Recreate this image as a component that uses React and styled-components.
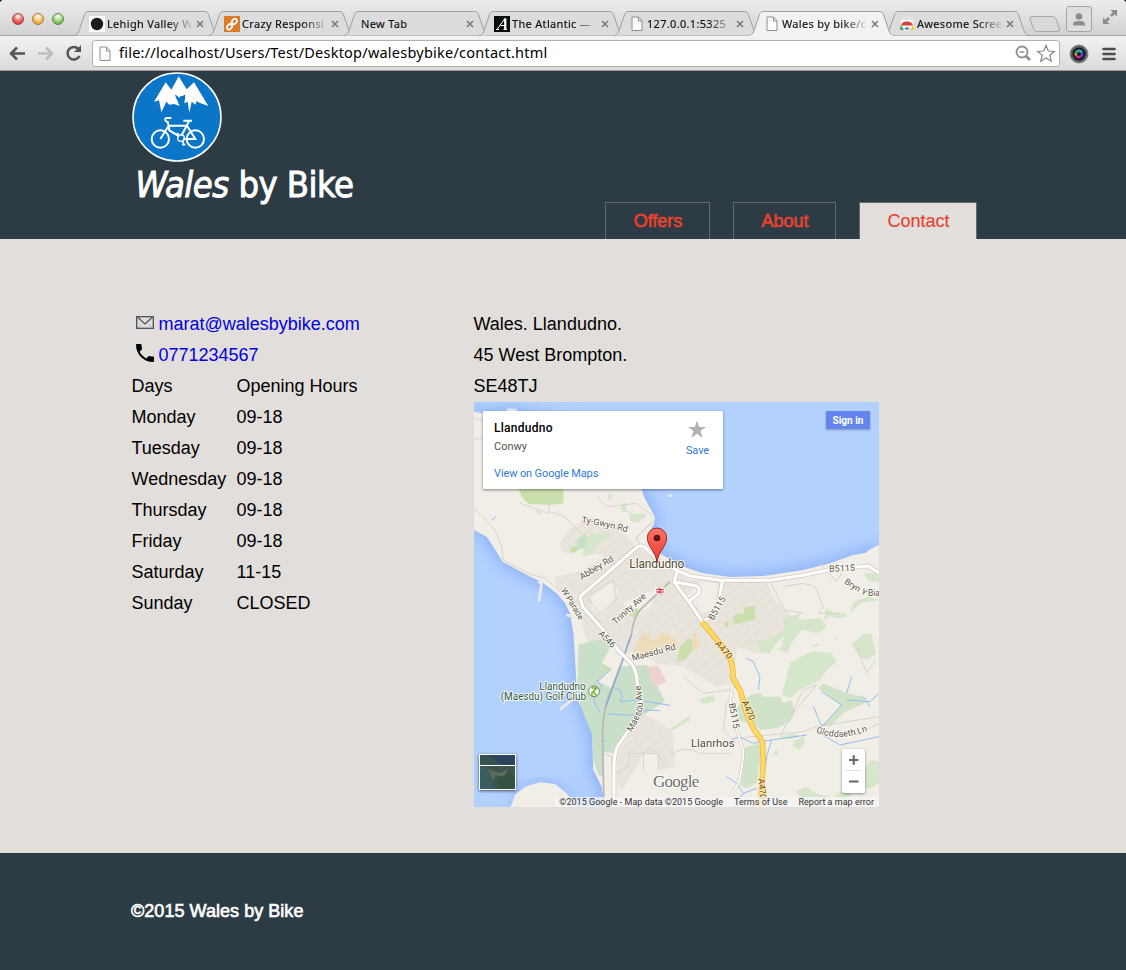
import React from 'react';
import styled, { createGlobalStyle, css } from 'styled-components';

const GlobalStyle = createGlobalStyle`
  * { box-sizing: border-box; }
  html, body { margin: 0; background: #111; }
  body { font-family: "Liberation Sans", Arial, sans-serif; font-size: 18px; color: #000; }
  svg { display: block; flex: none; }
`;

const Window = styled.div`
  width: 1126px;
  height: 970px;
  display: flex;
  flex-direction: column;
  overflow: hidden;
  border-radius: 4px 4px 0 0;
  background: #e2dedb;
`;

/* ---------- browser chrome ---------- */

const TabStrip = styled.div`
  height: 36px;
  display: flex;
  align-items: flex-start;
  background: linear-gradient(#ececec, #d2d2d2);
  border-bottom: 1px solid #a2a2a2;
  font-family: "Noto Sans", "Open Sans", sans-serif;
`;

const Lights = styled.div`
  display: flex;
  gap: 8px;
  padding: 13px 0 0 12px;
  width: 74px;
`;

const Light = styled.span`
  width: 12px;
  height: 12px;
  border-radius: 50%;
  background: radial-gradient(circle at 50% 25%, #fff 0%, ${p => p.$mid} 38%, ${p => p.$tone} 75%);
  border: 1px solid ${p => p.$edge};
`;

const Tabs = styled.div`
  display: flex;
  padding-top: 11px;
`;

const TabBox = styled.div`
  position: relative;
  width: 145px;
  height: 25px;
  margin-right: -10px;
  padding: 0 15px 0 15px;
  display: flex;
  align-items: center;
  z-index: ${p => (p.$active ? 2 : 1)};
`;

const TabShape = styled.svg`
  position: absolute;
  left: 0;
  top: 0;
  z-index: -1;
`;

const TabTitle = styled.span`
  flex: 1;
  margin: 0 5px 0 2px;
  font-size: 11px;
  line-height: 16px;
  letter-spacing: 0.32px;
  color: #111;
  -webkit-text-stroke: 0.15px #111;
  white-space: nowrap;
  overflow: hidden;
  ${p => p.$fade && css`mask-image: linear-gradient(90deg, #000 72%, transparent 104%);`}
`;

const ProfileButton = styled.div`
  width: 26px;
  height: 26px;
  margin: 6px 0 0 5px;
  border: 1px solid #a5a5a5;
  border-radius: 3px;
  background: #dedede;
  display: flex;
  align-items: center;
  justify-content: center;
`;

const NewTab = styled.svg`
  margin: 16px 0 0 9px;
`;

const FullScreen = styled.svg`
  margin: 9px 0 0 10px;
`;

const Toolbar = styled.div`
  height: 35px;
  padding: 4px 9px 0 9px;
  display: flex;
  align-items: flex-start;
  background: linear-gradient(#f2f2f2, #dcdcdc 94%);
  border-bottom: 1px solid #9b9b9b;
`;

const NavButtons = styled.div`
  display: flex;
  gap: 10px;
  width: 83px;
  padding-top: 4px;
`;

const Omnibox = styled.div`
  width: 968px;
  height: 27px;
  display: flex;
  align-items: center;
  padding: 0 3px 0 6px;
  background: #fff;
  border: 1px solid #b0b0b0;
  border-radius: 3px;
`;

const Address = styled.span`
  flex: 1;
  margin-left: 8px;
  padding-bottom: 2px;
  font-family: "Noto Sans", "Open Sans", sans-serif;
  font-size: 14.5px;
  line-height: 21px;
  letter-spacing: 0.23px;
`;

const ToolIcons = styled.div`
  display: flex;
  align-items: center;
  gap: 13px;
  margin-left: 8.500px;
  height: 27px;
`;

/* ---------- page ---------- */

const Header = styled.header`
  height: 168px;
  background: #2d3c44;
  display: flex;
  justify-content: space-between;
  padding: 1px 149px 0 132px;
`;

const Brand = styled.h1`
  margin: 0;
  font-family: "DejaVu Sans Condensed", "DejaVu Sans", sans-serif;
  font-stretch: condensed;
  font-weight: 400;
  font-size: 36px;
  line-height: 45px;
  color: #fff;
  white-space: nowrap;
`;

const BrandText = styled.span`
  display: block;
  padding-left: 3.500px;
  letter-spacing: -0.52px;
  -webkit-text-stroke: 0.9px #fff;
`;

const Nav = styled.nav`
  display: flex;
  align-items: flex-end;
  gap: 23px;
`;

const NavLink = styled.a`
  height: 37px;
  width: ${p => p.$width}px;
  padding-left: 1px;
  border: 1px solid #66696b;
  border-bottom: 0;
  text-align: center;
  line-height: 36px;
  color: #e8412f;
  ${p => (p.$active
    ? css`background: #e2dedb; -webkit-text-stroke: 0.15px #e8412f;`
    : css`-webkit-text-stroke: 0.6px #e8412f;`)}
`;

const Main = styled.main`
  height: 614px;
  padding: 70px 0 0 131.5px;
  display: flex;
`;

const Column = styled.section`
  width: ${p => p.$width}px;
`;

const Line = styled.div`
  height: 31px;
  line-height: 31px;
  display: flex;
  white-space: nowrap;
`;

const IconSlot = styled.span`
  width: 27px;
  padding: ${p => p.$top}px 0 0 4.5px;
`;

const Link = styled.a`
  color: #0000e0;
`;

const Day = styled.span`
  width: 105px;
`;

const Footer = styled.footer`
  flex: 1;
  background: #2d3c44;
  color: #fff;
  padding: 47px 0 0 131px;
  line-height: 22px;
  letter-spacing: 0.04px;
  -webkit-text-stroke: 0.65px #fff;
`;

/* ---------- map ---------- */

const MapFrame = styled.div`
  position: relative;
  width: 405px;
  height: 405px;
  margin-left: 0.5px;
  overflow: hidden;
  font-family: Roboto, sans-serif;
`;

const PlaceCard = styled.div`
  position: absolute;
  left: 9px;
  top: 9px;
  width: 240px;
  height: 78px;
  padding: 8px 14px 0 11px;
  display: flex;
  justify-content: space-between;
  background: #fff;
  border-radius: 1px;
  box-shadow: 0 1px 3px rgba(0, 0, 0, 0.45);
`;

const PlaceInfo = styled.div`
  display: flex;
  flex-direction: column;
`;

const PlaceName = styled.span`
  font-size: 12px;
  font-weight: 500;
  line-height: 18px;
  letter-spacing: 0.28px;
`;

const PlaceRegion = styled.span`
  font-size: 11px;
  line-height: 19px;
  color: #555;
`;

const MapLink = styled.span`
  font-size: 11px;
  line-height: 14px;
  letter-spacing: -0.12px;
  margin-top: ${p => p.$top}px;
  color: #2f7bd6;
`;

const SaveBox = styled.div`
  display: flex;
  flex-direction: column;
  align-items: center;
  padding-top: 1px;
`;

const SignIn = styled.div`
  position: absolute;
  left: 352px;
  top: 9px;
  width: 44px;
  height: 18px;
  line-height: 19px;
  text-align: center;
  font-size: 10px;
  font-weight: 700;
  color: #fff;
  background: #6585ee;
  box-shadow: 0 1px 2px rgba(0, 0, 0, 0.3);
`;

const Zoomer = styled.div`
  position: absolute;
  left: 368px;
  top: 347px;
  width: 23px;
  height: 44px;
  background: #fff;
  border-radius: 2px;
  box-shadow: 0 1px 3px rgba(0, 0, 0, 0.4);
`;

const Thumb = styled.div`
  position: absolute;
  left: 5px;
  top: 352px;
  width: 37px;
  height: 36px;
  border: 1px solid #fff;
  box-shadow: 0 1px 3px rgba(0, 0, 0, 0.6);
`;

const Credits = styled.div`
  position: absolute;
  right: 0;
  bottom: 0;
  height: 10px;
  display: flex;
  gap: 11px;
  padding: 0 5px 0 4px;
  background: rgba(245, 245, 245, 0.75);
  font-size: 9px;
  line-height: 10px;
  letter-spacing: 0.02px;
  color: #333;
  white-space: nowrap;
`;

const Label = styled.text`
  font-family: Roboto, sans-serif;
  font-size: ${p => p.$size || 27}px;
  fill: ${p => p.$fill || '#59554d'};
  stroke: ${p => p.$halo || '#fffdf8'};
  stroke-opacity: 0.85;
  stroke-width: 6px;
  stroke-linejoin: round;
  paint-order: stroke;
`;

/* ---------- icons ---------- */

const PageIcon = ({ big }) => (
  <svg width={big ? 12 : 16} height="16" viewBox={big ? '0 0 12 16' : '-2 0 16 16'}>
    <path d="M1 1h6.500L11 4.700V14.500H1z" fill="#fafafa" stroke="#8f8f8f" />
    <path d="M7.500 1v4H11" fill="none" stroke="#8f8f8f" />
  </svg>
);

const favicons = {
  dot: (
    <svg width="16" height="16"><rect width="16" height="16" fill="#fff" /><circle cx="8" cy="8" r="6.200" fill="#1c1c1c" /></svg>
  ),
  chain: (
    <svg width="16" height="16">
      <rect width="16" height="16" fill="#dd7a27" />
      <g fill="none" stroke="#fff" strokeWidth="1.800">
        <rect x="-2.900" y="-2.100" width="5.800" height="4.200" rx="2.100" transform="translate(10.300 5.500) rotate(-50)" />
        <rect x="-2.900" y="-2.100" width="5.800" height="4.200" rx="2.100" transform="translate(5.500 10.800) rotate(-50)" />
        <path d="M7 9l2-2.300" />
      </g>
    </svg>
  ),
  atlantic: (
    <svg width="16" height="16">
      <rect width="16" height="16" fill="#080c0c" />
      <path d="M3 13.500L11 2.500M11 2.500V13.500M6.500 9.500H11M2 13.500H5M9.500 13.500H13" fill="none" stroke="#fff" strokeWidth="1" />
      <path d="M11.300 2.500V13.500" stroke="#fff" strokeWidth="2.200" />
    </svg>
  ),
  page: <PageIcon />,
  store: (
    <svg width="16" height="16">
      <path d="M2 3.500h12l1 10.500H1z" fill="#f4f4f4" />
      <path d="M4.500 3.500V1.500h7v2" fill="none" stroke="#e6e6e6" />
      <path d="M2 9.500a6.200 5.500 0 0 1 12 0z" fill="#d6413a" />
      <path d="M1.500 9l4 5H1z" fill="#3fa65a" />
      <path d="M14.500 9l-3.500 5h4z" fill="#f3c727" />
      <path d="M5 14a3 3.300 0 0 1 6 0z" fill="#4278c4" stroke="#fff" />
    </svg>
  ),
};

const CloseIcon = () => (
  <svg width="8" height="8"><path d="M1 1l6 6M7 1l-6 6" stroke="#777" strokeWidth="1.500" /></svg>
);

const tabs = [
  { title: 'Lehigh Valley W', icon: 'dot', fade: true },
  { title: 'Crazy Responsi', icon: 'chain', fade: true },
  { title: 'New Tab' },
  { title: 'The Atlantic —', icon: 'atlantic', fade: true },
  { title: '127.0.0.1:5325', icon: 'page', fade: true },
  { title: 'Wales by bike/c', icon: 'page', fade: true, active: true },
  { title: 'Awesome Scree', icon: 'store', fade: true },
];

const Tab = ({ title, icon, fade, active }) => (
  <TabBox $active={active}>
    <TabShape width="145" height="26" viewBox="0 0 145 26">
      <path
        d="M0 24.500C4 24 4.500 21 6 17L10 5C11 1.500 12 .5 15 .5H130C133 .5 134 1.500 135 5L139 17C140.500 21 141 24 145 24.500"
        fill={active ? '#f2f2f2' : '#dcdcdc'}
        stroke="#a0a0a0"
      />
      {active && <path d="M1 25h143" stroke="#f2f2f2" strokeWidth="2" />}
    </TabShape>
    {icon && favicons[icon]}
    <TabTitle $fade={fade}>{title}</TabTitle>
    <CloseIcon />
  </TabBox>
);

const Logo = () => (
  <svg width="90" height="90" viewBox="36 21 270 270">
    <circle cx="171" cy="156" r="132" fill="#0b76c8" stroke="#fff" strokeWidth="4.500" />
    <path
      fill="#fff"
      d="M102 110L137 52L154 74L176 34L200 73L222 52L265 123L238 113L230 108L226 119L215 110L208 143L203 110L193 115L196 92L189 97L183 92L177 99L170 91L167 97L175 109L179 123L162 117L148 119L139 110L124 142L117 106z"
    />
    <path fill="#0b76c8" d="M164 88L173 95L179 102L186 94L197 88L190 106L182 110L178 122L172 106z" />
    <g fill="none" stroke="#fff" strokeWidth="6">
      <circle cx="121" cy="222" r="26" />
      <circle cx="226" cy="222" r="26" />
      <path d="M121 222L146 182L142 168M146 182H201M146 182L148 196L178 214M208 167L184 212M201 182L226 222H190M190 167H216" />
      <path d="M142 172L136 166Q134 158 142 159H154" />
      <circle cx="183" cy="219" r="10" strokeWidth="4" />
      <path d="M176 208L170 205M188 228L191 238M186 239H196" strokeWidth="5" />
    </g>
  </svg>
);

/* ---------- map data: three units to one pixel ---------- */

const LAND = 'M12 35L60 44L110 40L125 25L145 40L250 60L400 150L500 230L515 267L522 290L538 320L555 350L552 372L541 390L536 420L550 448L600 478L640 500L700 520L780 531L880 528L1000 510L1080 490L1150 465L1188 458L1200 448L1227 435V1221H398L400 1190L395 1160L370 1110L366 1000L348 945L322 900L314 760L310 700L300 640L285 610L262 582L215 545L180 530L98 485L70 440L50 410L12 390z';
const ISLE = 'M122 1221L135 1185L165 1160L210 1147L255 1152L290 1180L318 1221z';

const urban = [
  'M270 430L290 395L350 350L440 370L500 440L560 480L620 520L660 540L760 545L890 545L915 600L960 640L940 690L900 760L860 760L800 740L790 850L740 860L690 830L640 800L560 790L520 760L470 760L430 740L350 720L325 630L260 560L255 530L330 515L400 470L350 440L300 460L275 455z',
  'M515 940L560 960L610 1000L615 1100L570 1110L560 1060L520 1060L500 1100L455 1170L440 1150L445 1060z',
];

const parks = [
  { d: 'M145 267H280V310L240 315L200 313L175 312L155 290z', c: '#cbdfac' },
  { d: 'M325 735L365 722L400 718L425 735L395 790L425 808L385 845L445 800L530 795L585 905L520 945L430 1060L400 1055L400 1132L385 1125L370 1080L365 1000L340 940L322 880z', c: '#c9dfc9' },
  { d: 'M395 788L425 808L415 816L396 800z', c: '#cbdfac' },
  { d: 'M475 645L500 622L510 635L490 655z', c: '#cbdfac' },
  { d: 'M460 310L470 308L468 330L485 338L455 335L450 325z', c: '#d5e6ca' },
  { d: 'M478 340L500 342L525 340L528 355L512 358L505 370L480 362z', c: '#d5e6ca' },
  { d: 'M340 450L360 400L395 405L415 390L420 410L395 425L370 440L378 460L340 470z', c: '#d5e6ca' },
  { d: 'M320 420L345 400L355 420L345 445L325 450z', c: '#c9dfc9' },
  { d: 'M298 448L318 435L328 448L310 460z', c: '#cbdfac' },
  { d: 'M412 295L420 275L427 292L420 300zM195 328L215 338L215 345L200 340z', c: '#d5e6ca' },
  { d: 'M630 745L658 720L681 740L643 787L620 790z', c: '#cbdfac', shift: 'translate(70 -15)' },
  { d: 'M790 645L820 640L825 625L855 618L856 658L800 672L790 670zM762 665L775 662L775 680L765 682z', c: '#cbdfac' },
  { d: 'M825 622L850 618L852 630L828 634z', c: '#cbdfac' },
  { d: 'M940 655L990 640L985 660L1050 655L1070 680L1045 700L995 690L965 730L950 760L920 745L935 740L940 710L915 735L900 760L870 750L860 730L835 730L832 720L860 724L900 715L940 690z', c: '#d5e6ca' },
  { d: 'M1020 740L1040 730L1048 735L1040 740zM1095 715L1100 710L1100 722zM1075 645L1130 640L1128 650L1100 655zM1070 625L1095 640L1060 660z', c: '#d5e6ca' },
  { d: 'M1185 700L1205 702L1218 760L1190 780L1170 770L1145 735L1165 715z', c: '#d5e6ca' },
  { d: 'M960 788L1030 752L1085 760L1100 785L1070 810L1050 840L990 870L960 895L935 885L945 850z', c: '#d5e6ca' },
  { d: 'M800 920L840 885L870 878L880 890L930 890L940 910L965 900L975 935L960 965L920 985L870 990L850 970L840 970L800 960L805 945z', c: '#d0e3c8' },
  { d: 'M1045 865L1060 850L1130 880L1180 890L1185 910L1125 935L1080 980L1060 975L1115 915z', c: '#d0e3c8' },
  { d: 'M820 1045L865 1030L875 1050L860 1150L830 1165L812 1155L820 1090z', c: '#d0e3c8' },
  { d: 'M1205 1080L1227 1085V1150L1200 1165L1150 1175L1130 1200L1090 1190L1165 1140L1185 1100z', c: '#d5e6ca' },
  { d: 'M975 1175L1010 1160L1035 1180L1080 1190L1070 1205L1010 1205z', c: '#d5e6ca' },
  { d: 'M970 1025L1000 1010L1005 1025L990 1050L970 1040zM905 1065L920 1050L925 1065zM930 1010L970 1000L990 1008L960 1018z', c: '#d5e6ca' },
  { d: 'M685 900L710 890L730 885L735 905L700 912zM600 985L620 975L660 945L660 960L610 990L590 990z', c: '#d5e6ca' },
  { d: 'M1180 520L1227 520V545L1200 545zM1150 605L1195 590L1227 600L1170 610L1140 640z', c: '#d5e6ca' },
  { d: 'M490 757L510 710L560 720L575 693L612 715L625 735L610 745L560 755L530 765z', c: '#ecdcba' },
  { d: 'M670 698H676L692 735L676 750L665 740z', c: '#ecdcba' },
  { d: 'M515 702L540 698L540 715L518 720z', c: '#ecdcba' },
  { d: 'M535 800L565 798L590 845L550 862z', c: '#eed2cf' },
];

const lanes = [
  'M12 325L40 350L75 390L95 440L100 480L180 522L225 535L270 575',
  'M12 118Q80 100 100 160', 'M12 55L120 85', 'M150 310L180 320L235 340L240 300M240 335L285 350L330 400',
  'M380 290L410 320L500 310L550 350M495 420L520 390L545 370',
  'M510 440L500 410L530 385L552 360', 'M800 1015L870 1008L1000 995L1040 980L1227 950M930 1010L1000 870L1040 855L960 950',
  'M600 1070Q640 1030 690 1060L780 1060', 'M940 560L1000 550L1035 560L1060 620L1045 640L1110 640',
  'M900 545L945 630L1000 640', 'M1050 490L1100 545L1120 510', 'M770 900L760 990L800 1030M1160 740L1190 818L1218 780',
  'M350 590L430 540L440 600L390 640z', 'M640 830L700 880L780 870M480 1060H560L590 1100',
  'M400 1060L425 1070L430 1180M440 1120L475 1100L480 1060', 'M520 1110V1060Q540 1040 565 1060V1110', 'M1150 1010L1227 970',
];

const roads = [
  'M330 590L500 442Q513 433 525 443L562 480L622 512L660 528L750 541H900L1000 526L1085 508L1195 498L1227 519',
  'M330 590L338 620L400 690L442 748L478 783Q500 805 502 850L512 900Q520 930 480 985L445 1035Q432 1060 432 1100V1221',
  'M622 514L612 545L660 610L697 665', 'M612 545L680 558Q692 566 686 580L656 606', 'M757 542L751 580L735 640L700 665',
];

const streams = [
  'M380 845L425 808M380 840L395 860L375 885L372 905L390 935M395 850L450 870L458 890L450 905L500 900L600 916M415 942L465 945L510 945L525 930L570 932',
  'M830 775L850 785L870 830L865 870', 'M1055 875L1115 915L1055 980M1055 978L1030 920M1130 880L1145 830M1130 900L1200 905L1227 880M1180 890L1200 920',
  'M785 1020L805 1010L850 1030L870 1025L905 1020L1010 1005M905 1020L890 1070L885 1110', 'M770 1130L800 1150L820 1180L860 1165M820 1180L790 1221',
  'M65 360L78 350M1050 1000L1110 1035L1227 1010M400 1022H410',
];

const A470 = 'M695 665L760 742Q790 775 790 835L812 875L830 940L850 985L877 1025L880 1080L872 1221';
const B5115 = 'M790 835L780 905L800 990L820 1050Q818 1110 805 1150L760 1221';

const MapArt = () => (
  <svg width="405" height="405" viewBox="12 6 1215 1215">
    <defs>
      <filter id="shore" x="-20%" y="-20%" width="140%" height="140%"><feGaussianBlur stdDeviation="26" /></filter>
      <pattern id="streets" width="34" height="24" patternUnits="userSpaceOnUse" patternTransform="rotate(-38)">
        <path d="M0 1H34M1 0V24" stroke="#dfd9d0" strokeWidth="1.500" fill="none" />
      </pattern>
      <linearGradient id="pin" x1="0" y1="0" x2="0" y2="1"><stop offset="0" stopColor="#ff7468" /><stop offset="1" stopColor="#e8392e" /></linearGradient>
      <path id="maesdu" d="M485 997C515 945 522 925 516 890Q513 865 510 835" />
      <path id="gloddaeth" d="M1037 997Q1110 1026 1190 994" />
      <path id="tygwyn" d="M334 368Q395 376 480 399" />
    </defs>
    <rect x="0" y="0" width="1240" height="1240" fill="#b3d1ff" />
    <path d={LAND} fill="#84acf5" stroke="#84acf5" strokeWidth="10" filter="url(#shore)" />
    <path d={ISLE} fill="#84acf5" filter="url(#shore)" opacity=".8" />
    <path d={`${LAND}${ISLE}`} fill="#f1eee7" />
    <path d="M216 540L207 605M203 545L218 550M270 928L318 890M288 645L312 650M110 30H140M596 287H606" stroke="#ece9e6" strokeWidth="8" />
    {urban.map(d => <path key={d} d={d} fill="#e9e4dc" />)}
    {urban.map(d => <path key={`s${d}`} d={d} fill="url(#streets)" />)}
    <path d="M365 590L425 545L445 575L400 640L365 630zM690 545L745 550L735 620L700 640L650 590zM460 610L520 580L560 570L540 620L480 660z" fill="#f1eee7" />
    {parks.map(p => <path key={p.d} d={p.d} fill={p.c} transform={p.shift && 'translate(0 -6)'} />)}
    {lanes.map(d => <path key={d} d={d} fill="none" stroke="#d9d4c9" strokeWidth="3" />)}
    {streams.map(d => <path key={d} d={d} fill="none" stroke="#94bdf2" strokeWidth="3" />)}
    <path d="M385 845L425 808L445 802L425 865z" fill="#f1eee7" />
    <path d="M600 545L515 625Q490 650 485 700L455 790L415 890Q395 950 398 1030L402 1221" fill="none" stroke="#b9b7b3" strokeWidth="5" />
    <path d="M484 705L408 920" stroke="#8cacdb" strokeWidth="4" />
    <path d={B5115} fill="none" stroke="#d0cbc0" strokeWidth="9" />
    <path d={B5115} fill="none" stroke="#fff" strokeWidth="5" />
    {roads.map(d => <path key={d} d={d} fill="none" stroke="#d3cdc3" strokeWidth="14" strokeLinejoin="round" />)}
    {roads.map(d => <path key={`w${d}`} d={d} fill="none" stroke="#fff" strokeWidth="9" strokeLinejoin="round" />)}
    <path d={A470} fill="none" stroke="#e7b944" strokeWidth="17" strokeLinejoin="round" />
    <path d={A470} fill="none" stroke="#ffd963" strokeWidth="12" strokeLinejoin="round" />

    <Label><textPath href="#tygwyn">Ty-Gwyn Rd</textPath></Label>
    <Label transform="translate(335 540) rotate(-31)">Abbey Rd</Label>
    <Label transform="translate(273 570) rotate(59)" $size={25}>W Parade</Label>
    <Label transform="translate(437 675) rotate(-42)">Trinity Ave</Label>
    <Label transform="translate(384 702) rotate(46)" textLength="60">A546</Label>
    <Label transform="translate(488 783) rotate(-15)">Maesdu Rd</Label>
    <Label><textPath href="#maesdu">Maesdu Ave</textPath></Label>
    <Label transform="translate(1078 516) rotate(-3)" textLength="77">B5115</Label>
    <Label transform="translate(1121 549) rotate(32)" $size={26}>Bryn Y</Label>
    <Label x="1194" y="587" $size={25}>Bia</Label>
    <Label transform="translate(730 662) rotate(-60)" textLength="76">B5115</Label>
    <Label transform="translate(776 911) rotate(79)" textLength="77">B5115</Label>
    <Label transform="translate(734 732) rotate(49)" textLength="62" $fill="#704616" $halo="#ffeeb5">A470</Label>
    <Label transform="translate(815 906) rotate(67)" textLength="62" $fill="#704616" $halo="#ffeeb5">A470</Label>
    <Label transform="translate(865 1136) rotate(85)" textLength="62" $fill="#704616" $halo="#ffeeb5">A470</Label>
    <Label><textPath href="#gloddaeth">Gloddaeth Ln</textPath></Label>
    <Label x="478" y="503" textLength="165" $size={36} $fill="#534a3a">Llandudno</Label>
    <Label x="663" y="1041" textLength="131" $size={34} $fill="#534a3a">Llanrhos</Label>
    <Label x="208" y="869" textLength="139" $size={30} $fill="#305b48">Llandudno</Label>
    <Label x="92" y="900" textLength="256" $size={30} $fill="#305b48">(Maesdu) Golf Club</Label>
    <circle cx="372" cy="874" r="16" fill="#fff" stroke="#767c6c" strokeWidth="3" />
    <path d="M365 864H380L370 875L380 888M366 875V888" fill="none" stroke="#73b72b" strokeWidth="5" />
    <rect x="555" y="562" width="30" height="20" fill="#fff" opacity=".7" />
    <path d="M558 569H582M558 576H582M565 564L575 569L564 576L575 581" fill="none" stroke="#d83145" strokeWidth="3" />
    <path d="M561 487C558 455 532 440 532 413A29 29 0 0 1 590 413C590 440 564 455 561 487z" fill="url(#pin)" stroke="#9b2e27" strokeWidth="3" />
    <circle cx="561" cy="414" r="10" fill="#5c1511" />
    <text x="549" y="1162" textLength="139" fontFamily="Liberation Serif, serif" fontSize="51" fill="#6d6d6d" stroke="#fff" strokeWidth="4" paintOrder="stroke">Google</text>
  </svg>
);

const hours = [
  ['Days', 'Opening Hours'],
  ['Monday', '09-18'],
  ['Tuesday', '09-18'],
  ['Wednesday', '09-18'],
  ['Thursday', '09-18'],
  ['Friday', '09-18'],
  ['Saturday', '11-15'],
  ['Sunday', 'CLOSED'],
];

export default function App() {
  return (
    <Window>
      <GlobalStyle />
      <TabStrip>
        <Lights>
          <Light $mid="#f08a86" $tone="#dc3a3c" $edge="#9c4645" />
          <Light $mid="#fbd28a" $tone="#eda437" $edge="#a87c3c" />
          <Light $mid="#b5e09a" $tone="#72b84e" $edge="#5c8a49" />
        </Lights>
        <Tabs>{tabs.map(t => <Tab key={t.title} {...t} />)}</Tabs>
        <NewTab width="33" height="17">
          <path d="M4 .5H25Q27 .5 28 3L31.500 13Q32 15.500 29 15.500H9Q6.500 15.500 5.500 13L2 3Q1.500 .5 4 .5z" fill="#d9d9d9" stroke="#a6a6a6" />
        </NewTab>
        <ProfileButton>
          <svg width="12" height="13"><circle cx="6" cy="3.500" r="3.300" fill="#8c8c8c" /><path d="M0 12.500V11Q0 8 6 8T12 11V12.500z" fill="#8c8c8c" /></svg>
        </ProfileButton>
        <FullScreen width="16" height="16">
          <path d="M8.500 1H15V7.500L12.700 5.200L10 8L8 6L10.800 3.300zM1 8.500V15H7.500L5.200 12.700L8 10L6 8L3.300 10.800z" fill="#8d8d8d" />
        </FullScreen>
      </TabStrip>
      <Toolbar>
        <NavButtons>
          <svg width="18" height="18" fill="none" stroke="#545454" strokeWidth="2.500"><path d="M2 9.500H16M8 3.500L2 9.500L8 15.500" /></svg>
          <svg width="18" height="18" fill="none" stroke="#bdbdbd" strokeWidth="2.500"><path d="M1 9.500H15M9 3.500L15 9.500L9 15.500" /></svg>
          <svg width="18" height="18"><path d="M14.500 12A6.300 6.300 0 1 1 13.500 5" fill="none" stroke="#545454" strokeWidth="2.500" /><path d="M16 1V8H9z" fill="#545454" /></svg>
        </NavButtons>
        <Omnibox>
          <PageIcon big />
          <Address>file://localhost/Users/Test/Desktop/walesbybike/contact.html</Address>
          <svg width="21" height="17" fill="none" stroke="#8e8e8e"><circle cx="7" cy="7" r="5.500" strokeWidth="1.800" /><path d="M11 11L15 15" strokeWidth="2.500" /><path d="M4.500 7H9.500" strokeWidth="1.500" /></svg>
          <svg width="20" height="19"><path d="M10 1.500L12.300 7L18.300 7.400L13.700 11.200L15.300 17.200L10 13.900L4.700 17.200L6.300 11.200L1.700 7.400L7.700 7z" fill="#fff" stroke="#868686" strokeWidth="1.200" /></svg>
        </Omnibox>
        <ToolIcons>
          <svg width="20" height="20">
            <circle cx="10" cy="10" r="9" fill="#5a5f66" stroke="#8a8d91" />
            <circle cx="10" cy="10" r="6.500" fill="#17131d" />
            <path d="M10 10L5.500 9A4.500 4.500 0 0 1 9 5.500z" fill="#36b35d" />
            <path d="M10 10L9 5.500A4.500 4.500 0 0 1 14 8z" fill="#27b7c4" />
            <path d="M10 10L14 8A4.500 4.500 0 0 1 12 14z" fill="#4c49c6" />
            <path d="M10 10L12 14A4.500 4.500 0 0 1 6 12z" fill="#c72d7e" />
            <path d="M10 10L6 12A4 4 0 0 1 5.500 9z" fill="#d9a62e" />
            <circle cx="10" cy="10" r="1.800" fill="#17131d" />
          </svg>
          <svg width="14" height="14"><path d="M1.500 2H12.500M1.500 7H12.500M1.500 12H12.500" stroke="#4c4c4c" strokeWidth="2.600" strokeLinecap="round" /></svg>
        </ToolIcons>
      </Toolbar>

      <Header>
        <Brand>
          <Logo />
          <BrandText><em>Wales</em> by Bike</BrandText>
        </Brand>
        <Nav>
          <NavLink $width={105}>Offers</NavLink>
          <NavLink $width={103}>About</NavLink>
          <NavLink $width={118} $active>Contact</NavLink>
        </Nav>
      </Header>

      <Main>
        <Column $width={342}>
          <Line>
            <IconSlot $top={7}>
              <svg width="18" height="13" fill="none" stroke="#44505c" strokeWidth="1.300"><rect x=".7" y=".7" width="16.600" height="11.600" /><path d="M2 1.500L9 8L16 1.500" strokeWidth="1.200" /><path d="M2 11.500L6 7.500M16 11.500L12 7.500" strokeWidth=".6" opacity=".5" /></svg>
            </IconSlot>
            <Link>marat@walesbybike.com</Link>
          </Line>
          <Line>
            <IconSlot $top={4}>
              <svg width="18" height="18" viewBox="3 3 18 18"><path d="M6.620 10.790c1.440 2.830 3.760 5.140 6.590 6.590l2.200-2.200c.27-.27.67-.36 1.020-.24 1.120.37 2.330.57 3.570.57.55 0 1 .45 1 1V20c0 .55-.45 1-1 1-9.390 0-17-7.610-17-17 0-.55.450-1 1-1h3.500c.55 0 1 .45 1 1 0 1.250.2 2.450.57 3.570.11.35.03.74-.25 1.020z" /></svg>
            </IconSlot>
            <Link>0771234567</Link>
          </Line>
          {hours.map(([day, time]) => (
            <Line key={day}><Day>{day}</Day><span>{time}</span></Line>
          ))}
        </Column>
        <Column $width={406}>
          <Line>Wales. Llandudno.</Line>
          <Line>45 West Brompton.</Line>
          <Line>SE48TJ</Line>
          <MapFrame>
            <MapArt />
            <PlaceCard>
              <PlaceInfo>
                <PlaceName>Llandudno</PlaceName>
                <PlaceRegion>Conwy</PlaceRegion>
                <MapLink $top={11}>View on Google Maps</MapLink>
              </PlaceInfo>
              <SaveBox>
                <svg width="20" height="19" viewBox="0 0 20 19"><path d="M10 0.500L12.200 7H19L13.500 11L15.700 18L10 13.800L4.300 18L6.500 11L1 7H7.800z" fill="#b2b2b2" /></svg>
                <MapLink $top={5}>Save</MapLink>
              </SaveBox>
            </PlaceCard>
            <SignIn>Sign in</SignIn>
            <Thumb>
              <svg width="35" height="34">
                <rect width="35" height="34" fill="#3b554c" />
                <rect width="35" height="10" fill="#2c4360" />
                <path d="M0 0H8L16 5L20 10H0z" fill="#365250" />
                <path d="M0 11L12 16L10 25L16 34H0z" fill="#3b5d62" />
                <path d="M8 14L20 18L28 14L24 22L16 20L13 26z" fill="#5d6a5c" />
                <path d="M18 23L30 18L35 22V34H20z" fill="#31533f" />
                <path d="M0 10.500H35" stroke="#fff" />
              </svg>
            </Thumb>
            <Zoomer>
              <svg width="23" height="44"><path d="M7 11H16.500M11.750 6.300V15.700M7 32.500H16.500" stroke="#666" strokeWidth="2.200" /><path d="M4 21.500H19" stroke="#dedede" /></svg>
            </Zoomer>
            <Credits>
              <span>©2015 Google - Map data ©2015 Google</span>
              <span>Terms of Use</span>
              <span>Report a map error</span>
            </Credits>
          </MapFrame>
        </Column>
      </Main>

      <Footer>©2015 Wales by Bike</Footer>
    </Window>
  );
}
